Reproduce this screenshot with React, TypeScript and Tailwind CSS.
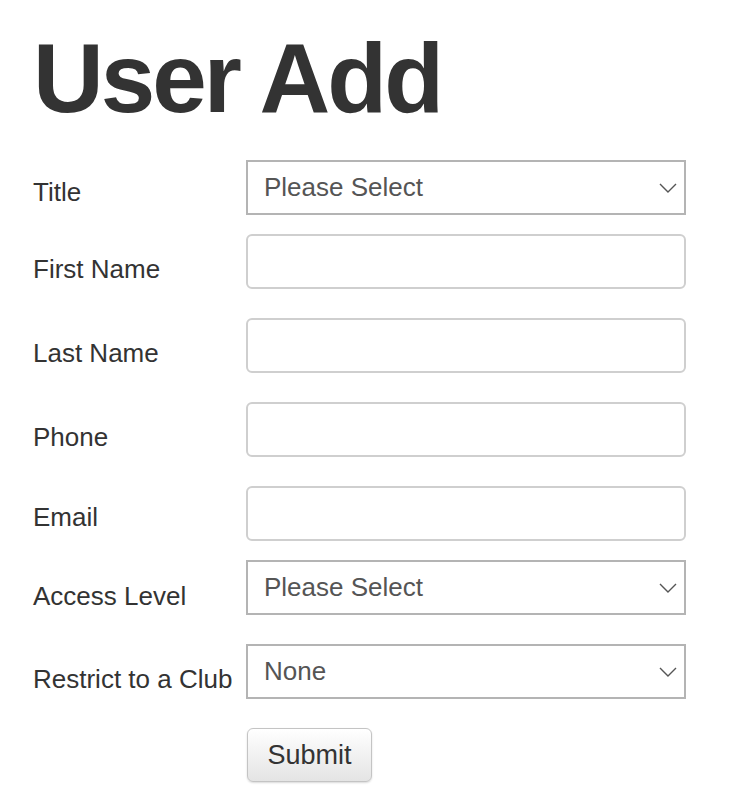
import React from "react";

// Riga del form: etichetta a sinistra, controllo a destra
type Row = {
  label: string;
  kind: "select" | "input";
  value?: string;
  mt: string; // margine sopra la riga
  pt: string; // spinta verticale dell'etichetta
};

const rows: Row[] = [
  { label: "Title", kind: "select", value: "Please Select", mt: "mt-[33px]", pt: "pt-[17px]" },
  { label: "First Name", kind: "input", mt: "mt-[19px]", pt: "pt-[20px]" },
  { label: "Last Name", kind: "input", mt: "mt-[29px]", pt: "pt-[20px]" },
  { label: "Phone", kind: "input", mt: "mt-[29px]", pt: "pt-[20px]" },
  { label: "Email", kind: "input", mt: "mt-[29px]", pt: "pt-[16px]" },
  { label: "Access Level", kind: "select", value: "Please Select", mt: "mt-[19px]", pt: "pt-[21px]" },
  { label: "Restrict to a Club", kind: "select", value: "None", mt: "mt-[29px]", pt: "pt-[20px]" },
];

function Chevron() {
  return (
    <svg
      className="pointer-events-none absolute right-[9px] top-[23px]"
      width="18"
      height="10"
      viewBox="0 0 18 10"
      fill="none"
    >
      <path d="M1 1 L9 9 L17 1" stroke="#555" strokeWidth="1.4" />
    </svg>
  );
}

export default function App() {
  return (
    <div className="min-h-[810px] w-[740px] bg-white font-['Liberation_Sans',Arial,sans-serif] text-[#333]">
      <div className="pl-[33px] pt-[29px]">
        {/* Titolo pagina */}
        <h1 className="text-[98px] font-bold leading-[98px] tracking-[-3px] text-[#333]">
          User Add
        </h1>

        {/* Campi del form */}
        {rows.map((row, i) => (
          <div key={i} className={`flex items-start ${row.mt}`}>
            <label className={`w-[213px] shrink-0 text-[26px] leading-[31px] ${row.pt}`}>
              {row.label}
            </label>
            {row.kind === "select" ? (
              <div className="relative h-[55px] w-[440px]">
                <select
                  defaultValue={row.value}
                  className="h-full w-full appearance-none rounded-none border-2 border-[#b4b4b4] bg-white pl-[16px] text-[26px] text-[#555] outline-none"
                >
                  <option>{row.value}</option>
                </select>
                <Chevron />
              </div>
            ) : (
              <input
                type="text"
                className="h-[55px] w-[440px] rounded-[6px] border-2 border-[#cfcfcf] bg-white px-[16px] text-[26px] text-[#555] outline-none"
              />
            )}
          </div>
        ))}

        {/* Bottone invio */}
        <div className="mt-[29px] flex">
          <div className="w-[214px] shrink-0" />
          <button className="h-[54px] w-[125px] rounded-[6px] border border-[#c4c4c4] bg-gradient-to-b from-white to-[#e4e4e4] text-[27px] text-[#333] shadow-[0_1px_2px_rgba(0,0,0,0.15)]">
            Submit
          </button>
        </div>
      </div>
    </div>
  );
}
